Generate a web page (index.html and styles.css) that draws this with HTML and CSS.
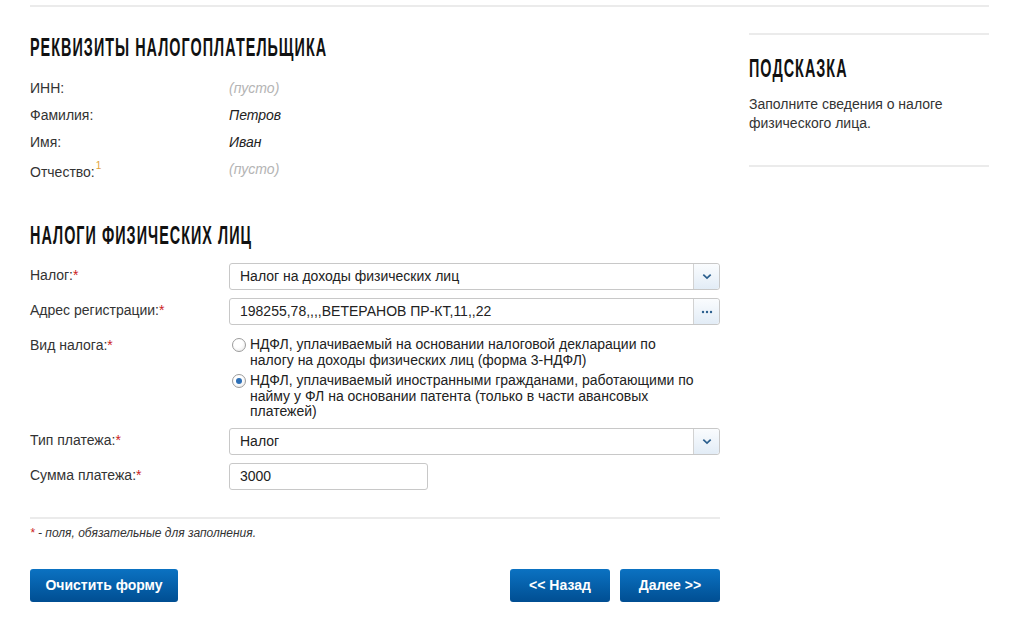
FILE: index.html
```html
<!DOCTYPE html>
<html lang="ru">
<head>
<meta charset="utf-8">
<title>Реквизиты налогоплательщика</title>
<link rel="stylesheet" href="styles.css">
</head>
<body>
<div class="page">
  <div class="topline"></div>
  <div class="columns">
    <main class="main">
      <h2 class="title title-first"><span>Реквизиты налогоплательщика</span></h2>
      <dl class="info">
        <div class="info-row"><dt>ИНН:</dt><dd class="empty">(пусто)</dd></div>
        <div class="info-row"><dt>Фамилия:</dt><dd>Петров</dd></div>
        <div class="info-row"><dt>Имя:</dt><dd>Иван</dd></div>
        <div class="info-row info-row-last"><dt>Отчество:<sup class="note">1</sup></dt><dd class="empty empty-shift">(пусто)</dd></div>
      </dl>

      <h2 class="title title-second"><span>Налоги физических лиц</span></h2>
      <div class="form">
        <div class="form-row">
          <div class="label">Налог:<span class="req">*</span></div>
          <div class="field">
            <div class="combo">
              <div class="combo-text">Налог на доходы физических лиц</div>
              <div class="combo-btn">
                <svg width="10" height="7" viewBox="0 0 10 7"><path d="M1.3 1.6 L5 5.1 L8.7 1.6" fill="none" stroke="#2b5f8e" stroke-width="1.7"/></svg>
              </div>
            </div>
          </div>
        </div>
        <div class="form-row">
          <div class="label">Адрес регистрации:<span class="req">*</span></div>
          <div class="field">
            <div class="combo">
              <div class="combo-text">198255,78,,,,ВЕТЕРАНОВ ПР-КТ,11,,22</div>
              <div class="combo-btn">
                <svg width="12" height="4" viewBox="0 0 12 4"><circle cx="2" cy="2" r="1.2" fill="#2b5f8e"/><circle cx="6" cy="2" r="1.2" fill="#2b5f8e"/><circle cx="10" cy="2" r="1.2" fill="#2b5f8e"/></svg>
              </div>
            </div>
          </div>
        </div>
        <div class="form-row form-row-radio">
          <div class="label label-radio">Вид налога:<span class="req">*</span></div>
          <div class="field radios">
            <div class="radio-item">
              <span class="radio"></span>
              <span class="radio-text">НДФЛ, уплачиваемый на основании налоговой декларации по налогу на доходы физических лиц (форма 3-НДФЛ)</span>
            </div>
            <div class="radio-item">
              <span class="radio radio-on"></span>
              <span class="radio-text">НДФЛ, уплачиваемый иностранными гражданами, работающими по найму у ФЛ на основании патента (только в части авансовых платежей)</span>
            </div>
          </div>
        </div>
        <div class="form-row">
          <div class="label">Тип платежа:<span class="req">*</span></div>
          <div class="field">
            <div class="combo">
              <div class="combo-text">Налог</div>
              <div class="combo-btn">
                <svg width="10" height="7" viewBox="0 0 10 7"><path d="M1.3 1.6 L5 5.1 L8.7 1.6" fill="none" stroke="#2b5f8e" stroke-width="1.7"/></svg>
              </div>
            </div>
          </div>
        </div>
        <div class="form-row">
          <div class="label">Сумма платежа:<span class="req">*</span></div>
          <div class="field">
            <div class="input-small">3000</div>
          </div>
        </div>
      </div>

      <div class="footnote"><span class="req">*</span> - поля, обязательные для заполнения.</div>

      <div class="actions">
        <button class="btn btn-clear" type="button">Очистить форму</button>
        <div class="actions-right">
          <button class="btn btn-nav" type="button">&lt;&lt; Назад</button>
          <button class="btn btn-nav" type="button">Далее &gt;&gt;</button>
        </div>
      </div>
    </main>

    <aside class="aside">
      <h2 class="title title-aside"><span>Подсказка</span></h2>
      <p class="hint">Заполните сведения о налоге физического лица.</p>
    </aside>
  </div>
</div>
</body>
</html>
```

FILE: styles.css
```css
html, body {
  margin: 0;
  padding: 0;
  background: #ffffff;
}

body {
  font-family: "Liberation Sans", Arial, sans-serif;
  font-size: 14px;
  color: #333333;
}

.page {
  width: 959px;
  padding: 5px 0 0 30px;
}

.topline {
  height: 2px;
  background: #ebebeb;
}

.columns {
  display: flex;
  align-items: flex-start;
  gap: 29px;
}

.main {
  width: 690px;
}

.aside {
  width: 240px;
  margin-top: 26px;
  border-top: 2px solid #ebebeb;
  border-bottom: 2px solid #ebebeb;
  padding-bottom: 32px;
}

.title {
  margin: 0;
  font-family: "Liberation Sans", Arial, sans-serif;
  font-weight: bold;
  font-size: 25px;
  line-height: 28px;
  color: #111111;
  text-transform: uppercase;
  letter-spacing: 1.8px;
  white-space: nowrap;
}

.title span {
  display: inline-block;
  transform: scaleX(0.575);
  transform-origin: left center;
}

.title-first {
  margin-top: 26px;
}

.title-second {
  margin-top: 36px;
}

.title-aside {
  margin-top: 19px;
}

.info {
  margin: 13px 0 0 0;
}

.info-row {
  display: flex;
  height: 27px;
  align-items: center;
}

.info-row-last {
  height: 30px;
  padding-top: 3px;
  box-sizing: border-box;
}

.info dt {
  width: 199px;
  margin: 0;
}

.info dd {
  margin: 0;
  font-style: italic;
  color: #222222;
}

.info dd.empty {
  color: #b4b4b4;
}

.info dd.empty-shift {
  position: relative;
  top: -3px;
}

.note {
  color: #e3a33c;
  font-size: 10px;
  vertical-align: top;
  position: relative;
  top: -4px;
  margin-left: 1px;
}

.req {
  color: #cc2222;
}

.form {
  margin-top: 14px;
}

.form-row {
  display: flex;
  margin-bottom: 8px;
}

.label {
  width: 199px;
  padding-top: 4px;
  line-height: 16px;
}

.field {
  flex: 1;
}

.combo {
  display: flex;
  height: 25px;
  border: 1px solid #c8c8c8;
  border-radius: 3px;
  background: #ffffff;
}

.combo-text {
  flex: 1;
  padding: 0 10px;
  line-height: 25px;
  color: #222222;
}

.combo-btn {
  width: 25px;
  border-left: 1px solid #d2d2d2;
  border-radius: 0 3px 3px 0;
  background: linear-gradient(#fafcfe, #e2ecf6);
  display: flex;
  align-items: center;
  justify-content: center;
}

.radios {
  padding-top: 4px;
}

.radio-item {
  display: flex;
  margin-bottom: 5px;
}

.radio-item:last-child {
  margin-bottom: 0;
}

.radio {
  flex: none;
  width: 12px;
  height: 12px;
  margin: 1px 4px 0 3px;
  border: 1px solid #9c9c9c;
  border-radius: 50%;
  background: radial-gradient(circle at 40% 35%, #ffffff 40%, #e4e4e4 100%);
  position: relative;
}

.radio-on::after {
  content: "";
  position: absolute;
  left: 3px;
  top: 3px;
  width: 6px;
  height: 6px;
  border-radius: 50%;
  background: #2d6fb6;
}

.radio-text {
  line-height: 15.5px;
  color: #222222;
  width: 447px;
}

.input-small {
  width: 187px;
  height: 25px;
  padding: 0 0 0 10px;
  border: 1px solid #c8c8c8;
  border-radius: 3px;
  line-height: 25px;
  color: #222222;
}

.footnote {
  margin-top: 27px;
  padding-top: 7px;
  border-top: 2px solid #ebebeb;
  font-size: 12px;
  line-height: 14px;
  font-style: italic;
  color: #333333;
}

.actions {
  margin-top: 29px;
  display: flex;
  justify-content: space-between;
}

.actions-right {
  display: flex;
  gap: 10px;
}

.btn {
  height: 33px;
  padding: 0;
  border: none;
  border-radius: 3px;
  background: linear-gradient(#0b72c2, #004e92);
  color: #ffffff;
  font-family: "Liberation Sans", Arial, sans-serif;
  font-weight: bold;
  font-size: 14px;
  white-space: nowrap;
  cursor: pointer;
}

.btn-clear {
  width: 148px;
}

.btn-nav {
  width: 100px;
}

.hint {
  margin: 13px 0 0 0;
  line-height: 19px;
  color: #333333;
}
```
